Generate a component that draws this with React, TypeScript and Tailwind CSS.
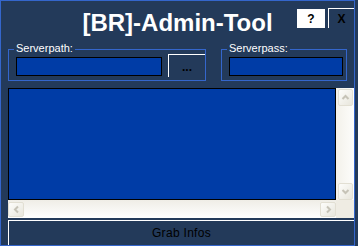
import React from 'react';

const Chevron: React.FC<{ dir: 'up' | 'down' | 'left' | 'right' }> = ({ dir }) => {
    const pts = {
        up: '1.5,6 4.5,3 7.5,6',
        down: '1.5,3 4.5,6 7.5,3',
        left: '6,1.5 3,4.5 6,7.5',
        right: '3,1.5 6,4.5 3,7.5',
    }[dir];
    return (
        <svg width="9" height="9" viewBox="0 0 9 9">
            <polyline points={pts} fill="none" stroke="#c6c3b7" strokeWidth="2" />
        </svg>
    );
};

const ScrollButton: React.FC<{ dir: 'up' | 'down' | 'left' | 'right'; className: string }> = ({ dir, className }) => (
    <div
        className={`flex items-center justify-center rounded-[2px] border border-[#e2dfd3] bg-linear-to-br from-[#fdfdfb] to-[#e8e6dc] ${className}`}
    >
        <Chevron dir={dir} />
    </div>
);

const GroupBox: React.FC<{ label: string; width: string; children: React.ReactNode }> = ({ label, width, children }) => (
    <div className={`mt-[8px] h-[32px] border border-[#3466cc] pl-[7px] ${width}`}>
        <div className="-mt-[8px] -ml-[2px] w-fit bg-[#233a5a] px-[2px] text-[11px] leading-[12px] text-white">
            {label}
        </div>
        {children}
    </div>
);

const App: React.FC = () => {
    return (
        <div className="h-[246px] w-[358px] bg-[#233a5a] font-['Liberation_Sans',Arial,sans-serif]">
            <div className="flex h-[246px] w-[355px] flex-col border border-[#3466cc]">
                <div className="relative h-[40px] pt-[10px] text-center">
                    <h1 className="text-[24px] leading-[24px] font-bold text-white">[BR]-Admin-Tool</h1>
                    <div className="absolute top-[7px] right-0 flex items-start gap-[3px]">
                        <button className="mt-[1px] flex h-[19px] w-[28px] items-center justify-center bg-white text-[12px] font-bold text-black">
                            ?
                        </button>
                        <button className="flex h-[20px] w-[26px] items-center justify-center border-t border-l border-white text-[12px] font-bold text-black">
                            X
                        </button>
                    </div>
                </div>

                <div className="flex gap-[15px] px-[7px]">
                    <GroupBox label="Serverpath:" width="w-[201px]">
                        <div className="flex items-start gap-[6px]">
                            <div className="mt-[3px] h-[19px] w-[146px] border border-black bg-[#003ca6]" />
                            <button className="flex h-[23px] w-[37px] items-center justify-center border-t border-l border-white pt-[2px] text-[12px] font-bold text-black">
                                ...
                            </button>
                        </div>
                    </GroupBox>
                    <GroupBox label="Serverpass:" width="w-[129px]">
                        <div className="mt-[3px] h-[19px] w-[114px] border border-black bg-[#003ca6]" />
                    </GroupBox>
                </div>

                <div className="mt-[7px] ml-[7px] grid h-[130px] w-[346px] grid-cols-[328px_18px] grid-rows-[112px_18px]">
                    <div className="border border-black bg-[#003ca6]" />
                    <div className="flex flex-col justify-between bg-linear-to-r from-[#f3f1ea] to-[#fdfdfb] pt-[1px] pl-[2px]">
                        <ScrollButton dir="up" className="h-[17px] w-[15px]" />
                        <ScrollButton dir="down" className="h-[17px] w-[15px]" />
                    </div>
                    <div className="flex items-start justify-between bg-linear-to-b from-[#efede6] to-white pt-[2px]">
                        <ScrollButton dir="left" className="h-[15px] w-[16px]" />
                        <ScrollButton dir="right" className="h-[15px] w-[16px]" />
                    </div>
                    <div className="bg-[#efece3]" />
                </div>

                <button className="mt-[2px] ml-[7px] flex h-[25px] w-[346px] items-center justify-center border-t border-l border-white text-[12px] font-normal tracking-[0.3px] text-black">
                    Grab Infos
                </button>
            </div>
        </div>
    );
};

export default App;
